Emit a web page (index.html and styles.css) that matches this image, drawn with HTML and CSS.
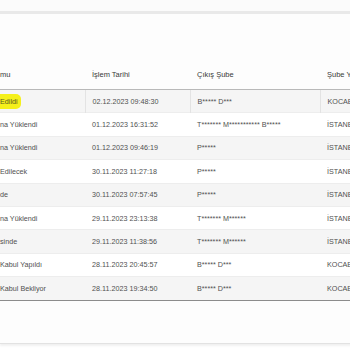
FILE: index.html
```html
<!DOCTYPE html>
<html lang="tr">
<head>
<meta charset="utf-8">
<link rel="stylesheet" href="styles.css">
</head>
<body>
<div class="topbar"></div>
<div class="card">
  <table class="grid">
    <colgroup>
      <col class="c1"><col class="c2"><col class="c3"><col class="c4">
    </colgroup>
    <thead>
      <tr><th>mu</th><th>İşlem Tarihi</th><th>Çıkış Şube</th><th>Şube Yeri</th></tr>
    </thead>
    <tbody>
      <tr class="first"><td><span class="mark">Edildi</span></td><td>02.12.2023 09:48:30</td><td>B***** D***</td><td>KOCAELİ</td></tr>
      <tr><td>na Yüklendi</td><td>01.12.2023 16:31:52</td><td>T******* M*********** B*****</td><td>İSTANBUL</td></tr>
      <tr><td>na Yüklendi</td><td>01.12.2023 09:46:19</td><td>P*****</td><td>İSTANBUL</td></tr>
      <tr><td>Edilecek</td><td>30.11.2023 11:27:18</td><td>P*****</td><td>İSTANBUL</td></tr>
      <tr><td>de</td><td>30.11.2023 07:57:45</td><td>P*****</td><td>İSTANBUL</td></tr>
      <tr><td>na Yüklendi</td><td>29.11.2023 23:13:38</td><td>T******* M******</td><td>İSTANBUL</td></tr>
      <tr><td>sinde</td><td>29.11.2023 11:38:56</td><td>T******* M******</td><td>İSTANBUL</td></tr>
      <tr><td>Kabul Yapıldı</td><td>28.11.2023 20:45:57</td><td>B***** D***</td><td>KOCAELİ</td></tr>
      <tr><td>Kabul Bekliyor</td><td>28.11.2023 19:34:50</td><td>B***** D***</td><td>KOCAELİ</td></tr>
    </tbody>
  </table>
</div>
</body>
</html>
```
FILE: styles.css
```css
html, body {
  margin: 0;
  padding: 0;
  background: #ffffff;
  overflow: hidden;
  width: 350px;
  height: 350px;
}
body {
  font-family: "Liberation Sans", Arial, sans-serif;
  color: #444;
}
.topbar {
  height: 11px;
  background: #fbfbfb;
  border-bottom: 3px solid #e9e9e9;
}
.card {
  background: #fdfdfd;
  padding-top: 46px;
  padding-bottom: 42px;
  border-bottom: 1px solid #e2e2e2;
  box-shadow: 0 2px 2px rgba(0,0,0,0.06);
  width: 420px;
}
.grid {
  border-collapse: collapse;
  table-layout: fixed;
  width: 420px;
  border-bottom: 1px solid #8c8c8c;
}
.c1 { width: 85px; }
.c2 { width: 105px; }
.c3 { width: 130px; }
.c4 { width: 100px; }
.grid th {
  height: 29px;
  text-align: left;
  font-weight: normal;
  font-size: 7.5px;
  color: #3a3a3a;
  padding: 0 0 0 7px;
  border-bottom: 1px solid #b9b9b9;
  white-space: nowrap;
  overflow: hidden;
}
.grid th:first-child, .grid td:first-child {
  padding-left: 0;
}
.grid td {
  height: 23.4px;
  padding: 0 0 0 7px;
  font-size: 7.2px;
  color: #505050;
  white-space: nowrap;
  overflow: hidden;
  border-top: 1px solid #ededed;
  box-sizing: border-box;
}
.grid tbody tr:nth-child(odd) td {
  background: #f5f5f5;
}
.grid tbody tr:nth-child(even) td {
  background: #ffffff;
}
.grid tr.first td + td {
  border-left: 1px solid #e3e3e3;
}
.mark {
  background: #f5f01a;
  color: #5a5a20;
  padding: 3px 3px 3px 0;
  border-radius: 0 5px 5px 0;
}
```
